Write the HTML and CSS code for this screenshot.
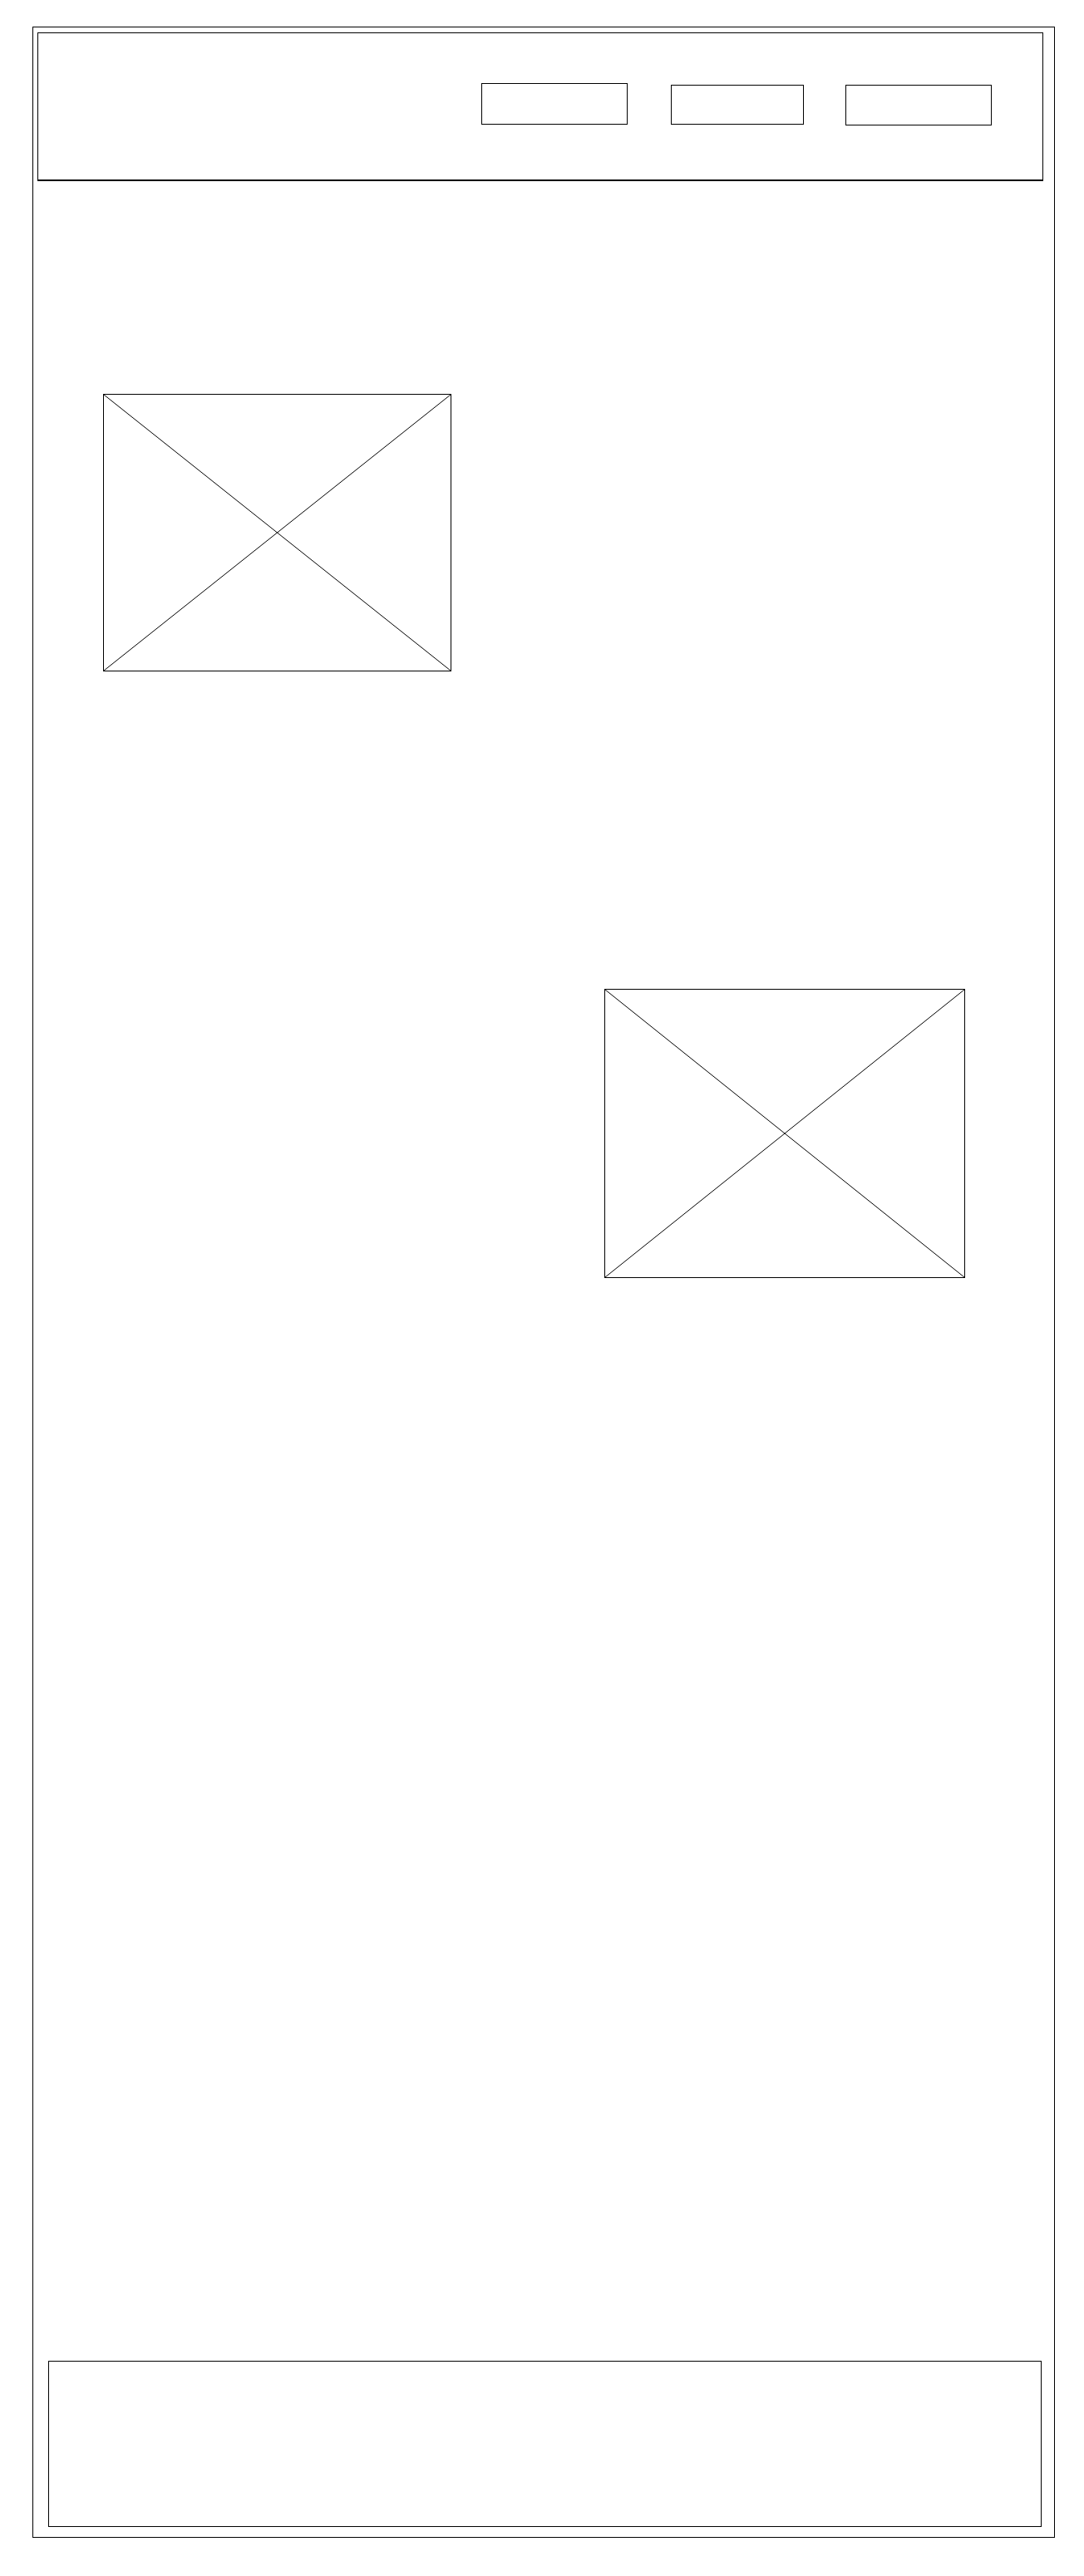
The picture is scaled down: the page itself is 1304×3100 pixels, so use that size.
FILE: index.html
```html
<!DOCTYPE html>
<html lang="en">
<head>
<meta charset="utf-8">
<title>Wireframe</title>
<link rel="stylesheet" href="styles.css">
</head>
<body>
<div class="page">
  <header class="header">
    <div class="btn btn-1"></div>
    <div class="btn btn-2"></div>
    <div class="btn btn-3"></div>
  </header>
  <main class="main">
    <div class="placeholder ph-1">
      <svg class="cross" viewBox="0 0 100 100" preserveAspectRatio="none">
        <line x1="0" y1="0" x2="100" y2="100"/>
        <line x1="100" y1="0" x2="0" y2="100"/>
      </svg>
    </div>
    <div class="placeholder ph-2">
      <svg class="cross" viewBox="0 0 100 100" preserveAspectRatio="none">
        <line x1="0" y1="0" x2="100" y2="100"/>
        <line x1="100" y1="0" x2="0" y2="100"/>
      </svg>
    </div>
  </main>
  <footer class="footer"></footer>
</div>
</body>
</html>
```

FILE: styles.css
```css
* { box-sizing: border-box; }
html, body { margin: 0; padding: 0; background: #fff; }
body { font-family: "Liberation Sans", Arial, sans-serif; }

.page {
  margin: 32px 0 0 39px;
  width: 1230px;
  height: 3022px;
  border: 1px solid #000;
  padding: 6px 13px 12px 5px;
  display: flex;
  flex-direction: column;
}

.header {
  height: 179px;
  border: 1px solid #000;
  border-bottom-width: 2px;
  display: flex;
  justify-content: flex-end;
  align-items: flex-start;
  padding-right: 61px;
  flex: none;
}

.btn { border: 1px solid #000; background: #fff; }
.btn-1 { width: 176px; height: 50px; margin-top: 60px; }
.btn-2 { width: 160px; height: 48px; margin-top: 62px; margin-left: 52px; }
.btn-3 { width: 176px; height: 49px; margin-top: 62px; margin-left: 50px; }

.main {
  flex: 1;
  display: flex;
  flex-direction: column;
  align-items: flex-start;
}

.placeholder { border: 1px solid #000; position: relative; }
.ph-1 { width: 419px; height: 334px; margin-top: 256px; margin-left: 79px; }
.ph-2 { width: 434px; height: 348px; margin-top: 382px; margin-left: 682px; }

.cross { display: block; width: 100%; height: 100%; }
.cross line { stroke: #000; stroke-width: 1; vector-effect: non-scaling-stroke; }

.footer {
  flex: none;
  width: 1195px;
  height: 200px;
  margin-left: 13px;
  border: 1px solid #000;
}
```
